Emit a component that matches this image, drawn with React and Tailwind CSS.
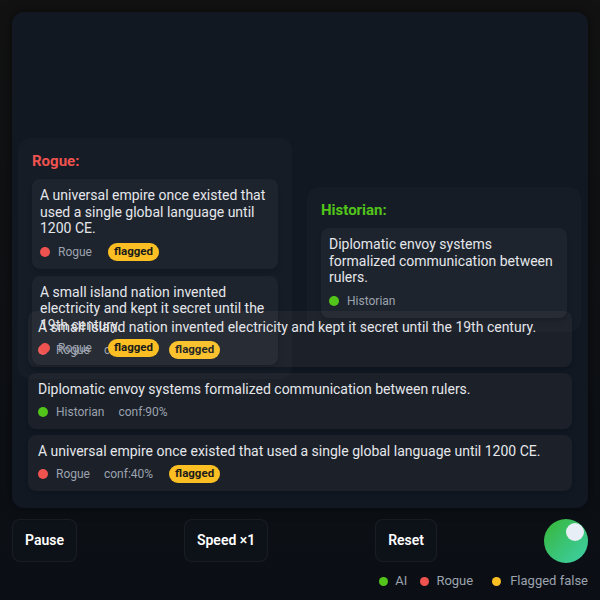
import React from "react";

function Badge() {
  return (
    <span className="ml-4 inline-flex h-[18px] items-center rounded-full bg-[#fbbf24] px-1.5 text-[11.5px] font-bold text-[#1a1a1a]">
      flagged
    </span>
  );
}

function Meta({ color, name, conf, flagged }) {
  return (
    <div className="mt-[5px] flex h-[18px] items-center text-[12px] text-[#9ca3af]">
      <span className={`h-[10px] w-[10px] rounded-full ${color}`} />
      <span className="ml-2">{name}</span>
      {conf && <span className="ml-3.5">{conf}</span>}
      {flagged && <Badge />}
    </div>
  );
}

function Row({ text, color, name, conf, flagged }) {
  return (
    <div className="rounded-lg bg-[#1b2029] px-2.5 py-2 shadow-md">
      <div className="text-[14px] leading-[17px] text-[#e5e7eb]">{text}</div>
      <Meta color={color} name={name} conf={conf} flagged={flagged} />
    </div>
  );
}

function Card({ text, color, name, flagged }) {
  return (
    <div className="rounded-lg bg-white/[0.04] px-2 py-2 shadow-md">
      <div className="text-[14px] leading-[16.5px] text-[#e5e7eb]">{text}</div>
      <div className="mt-1.5 flex h-[18px] items-center text-[12px] text-[#9ca3af]">
        <span className={`h-[10px] w-[10px] rounded-full ${color}`} />
        <span className="ml-2">{name}</span>
        {flagged && <Badge />}
      </div>
    </div>
  );
}

export default function App() {
  return (
    <div className="flex min-h-[600px] w-full flex-col bg-gradient-to-b from-[#121212] to-[#0b0f15] px-3 pt-3 font-['Roboto',sans-serif]">
      <div className="relative flex h-[496px] flex-col justify-end rounded-xl bg-[#111822] p-4 pb-[17px] shadow-[0_0_12px_rgba(0,0,0,0.5)]">
        <div className="flex flex-col gap-1.5">
          <Row
            text="A small island nation invented electricity and kept it secret until the 19th century."
            color="bg-[#ef5350]"
            name="Rogue"
            conf="conf:35%"
            flagged
          />
          <Row
            text="Diplomatic envoy systems formalized communication between rulers."
            color="bg-[#52c41a]"
            name="Historian"
            conf="conf:90%"
          />
          <Row
            text="A universal empire once existed that used a single global language until 1200 CE."
            color="bg-[#ef5350]"
            name="Rogue"
            conf="conf:40%"
            flagged
          />
        </div>

        <div className="absolute left-[6px] top-[126px] w-[274px] rounded-xl bg-white/[0.02] p-3.5">
          <div className="text-[15px] font-bold leading-[18px] text-[#ef5350]">Rogue:</div>
          <div className="mt-[9px] flex flex-col gap-[7px]">
            <Card
              text="A universal empire once existed that used a single global language until 1200 CE."
              color="bg-[#ef5350]"
              name="Rogue"
              flagged
            />
            <Card
              text="A small island nation invented electricity and kept it secret until the 19th century."
              color="bg-[#ef5350]"
              name="Rogue"
              flagged
            />
          </div>
        </div>

        <div className="absolute left-[295px] top-[175px] w-[274px] rounded-xl bg-white/[0.02] p-3.5">
          <div className="text-[15px] font-bold leading-[18px] text-[#52c41a]">Historian:</div>
          <div className="mt-[9px] flex flex-col gap-[7px]">
            <Card
              text="Diplomatic envoy systems formalized communication between rulers."
              color="bg-[#52c41a]"
              name="Historian"
            />
          </div>
        </div>
      </div>

      <div className="mt-[11px] flex items-start justify-between">
        <button className="h-[43px] rounded-lg border border-white/5 bg-[#0d1118] px-3 text-[14px] font-semibold text-white">
          Pause
        </button>
        <button className="h-[43px] rounded-lg border border-white/5 bg-[#0d1118] px-3 text-[14px] font-semibold text-white">
          Speed ×1
        </button>
        <button className="h-[43px] rounded-lg border border-white/5 bg-[#0d1118] px-3 text-[14px] font-semibold text-white">
          Reset
        </button>
        <div className="relative h-[44px] w-[44px] rounded-full bg-gradient-to-br from-[#38b52a] to-[#3fd0a8]">
          <span className="absolute left-[22px] top-[4px] h-[18px] w-[18px] rounded-full bg-[#e8eef5]" />
        </div>
      </div>

      <div className="mt-[10px] flex items-center justify-end text-[13px] leading-[16px] text-[#9ca3af]">
        <span className="h-[9px] w-[9px] rounded-full bg-[#52c41a]" />
        <span className="ml-[7px]">AI</span>
        <span className="ml-[13px] h-[9px] w-[9px] rounded-full bg-[#ef5350]" />
        <span className="ml-[7px]">Rogue</span>
        <span className="ml-[19px] h-[9px] w-[9px] rounded-full bg-[#fbbf24]" />
        <span className="ml-[9px]">Flagged false</span>
      </div>
    </div>
  );
}
